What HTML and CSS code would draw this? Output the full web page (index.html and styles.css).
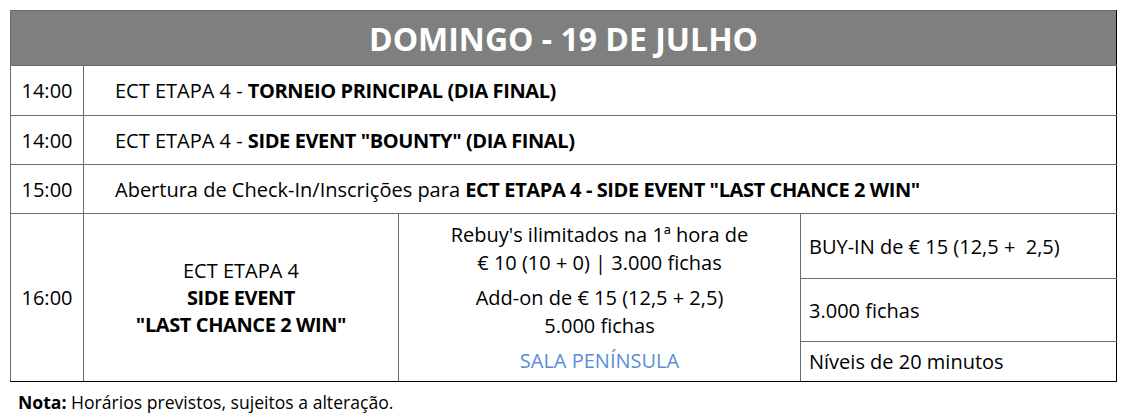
FILE: index.html
```html
<!DOCTYPE html>
<html lang="pt">
<head>
<meta charset="utf-8">
<title>Domingo - 19 de Julho</title>
<link rel="stylesheet" href="styles.css">
</head>
<body>
<div class="page">
<table class="sched">
  <colgroup>
    <col class="c-time"><col class="c-event"><col class="c-mid"><col class="c-right">
  </colgroup>
  <thead>
    <tr><th colspan="4" class="title">DOMINGO - 19 DE JULHO</th></tr>
  </thead>
  <tbody>
    <tr class="r1">
      <td class="time">14:00</td>
      <td colspan="3" class="desc">ECT ETAPA 4 - <b>TORNEIO PRINCIPAL (DIA FINAL)</b></td>
    </tr>
    <tr class="r2">
      <td class="time">14:00</td>
      <td colspan="3" class="desc">ECT ETAPA 4 - <b>SIDE EVENT "BOUNTY" (DIA FINAL)</b></td>
    </tr>
    <tr class="r3">
      <td class="time">15:00</td>
      <td colspan="3" class="desc">Abertura de Check-In/Inscrições para <b>ECT ETAPA 4 - SIDE EVENT "LAST CHANCE 2 WIN"</b></td>
    </tr>
    <tr class="s1">
      <td rowspan="3" class="time">16:00</td>
      <td rowspan="3" class="event">ECT ETAPA 4<br><b>SIDE EVENT</b><br><b>"LAST CHANCE 2 WIN"</b></td>
      <td rowspan="3" class="mid">
        <p class="para">Rebuy's ilimitados na 1ª hora de<br>€ 10 (10 + 0) | 3.000 fichas</p>
        <p class="para">Add-on de € 15 (12,5 + 2,5)<br>5.000 fichas</p>
        <p class="para room">SALA PENÍNSULA</p>
      </td>
      <td class="info">BUY-IN de € 15 (12,5 +&nbsp; 2,5)</td>
    </tr>
    <tr class="s2"><td class="info">3.000 fichas</td></tr>
    <tr class="s3"><td class="info">Níveis de 20 minutos</td></tr>
  </tbody>
</table>
<p class="note"><b>Nota:</b> Horários previstos, sujeitos a alteração.</p>
</div>
</body>
</html>
```
FILE: styles.css
```css
html, body {
  margin: 0;
  padding: 0;
  background: #ffffff;
}
.page {
  padding: 10px 0 0 10px;
  font-family: "Open Sans", "Liberation Sans", sans-serif;
  font-size: 20px;
  color: #000;
}
.sched {
  border-collapse: collapse;
  table-layout: fixed;
  width: 1106px;
}
.c-time { width: 73px; }
.c-event { width: 315px; }
.c-mid { width: 402px; }
.c-right { width: 316px; }
.sched th, .sched td {
  border: 1px solid #6b6b6b;
  padding: 0;
  vertical-align: middle;
  line-height: 27px;
}
.sched b { letter-spacing: -0.4px; }
.sched td:last-child, .sched th { border-right: 1px solid #000; }
.title {
  height: 54px;
  background: #7f7f7f;
  color: #fff;
  font-size: 32px;
  font-weight: 700;
  text-align: center;
  border-bottom: 1px solid #333;
}
.r1 td { height: 49px; }
.r2 td, .r3 td { height: 48px; }
.time { text-align: center; }
.desc { padding-left: 31px !important; }
.event { text-align: center; }
.mid { text-align: center; }
.para { margin: 0; line-height: 28px; }
.para + .para { margin-top: 7px; }
.room { color: #5a8ed6; }
.info { padding-left: 8px !important; }
.s1 .info { height: 64px; }
.s2 .info { height: 62px; }
.s3 .info { height: 39px; }
.sched tbody tr:last-child td, .s1 td[rowspan] { border-bottom: 1px solid #000; }
.note {
  margin: 8px 0 0 8px;
  font-size: 17.6px;
}
```
